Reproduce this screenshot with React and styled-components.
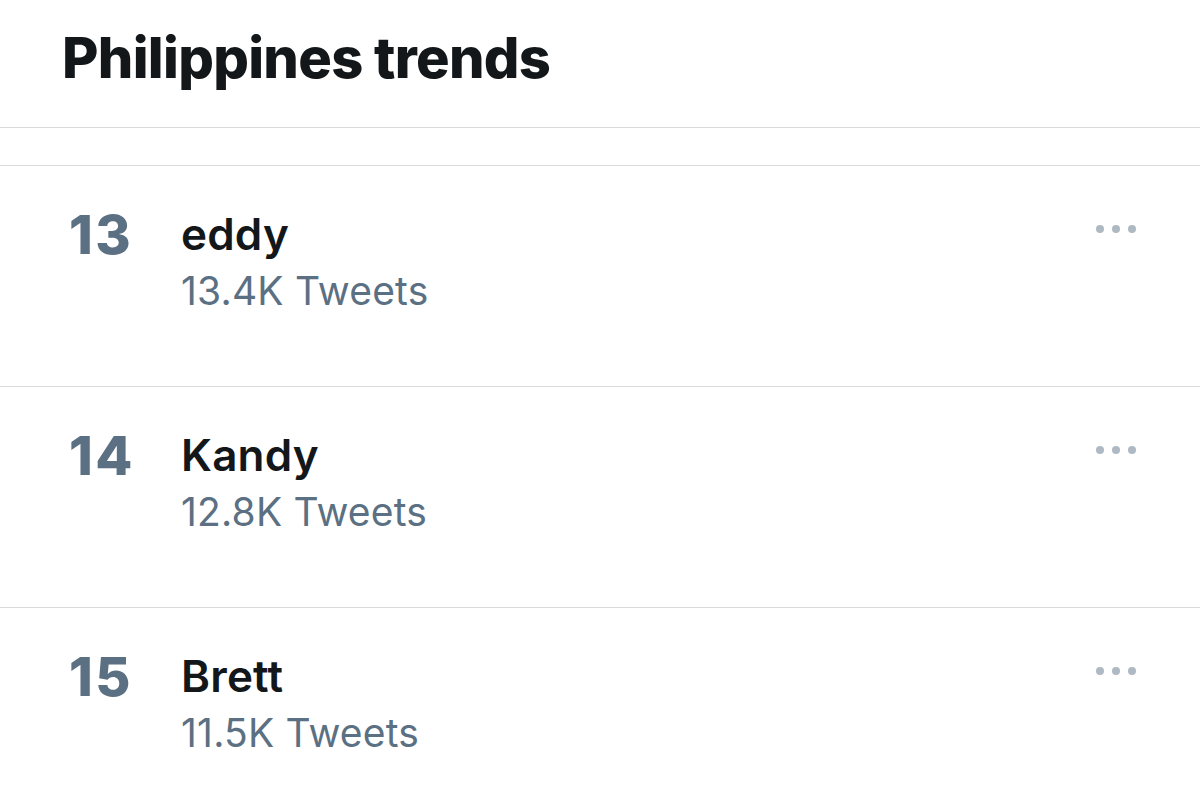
import React from "react";
import styled, { createGlobalStyle } from "styled-components";

const GlobalStyle = createGlobalStyle`
  html, body {
    margin: 0;
    padding: 0;
    background: #ffffff;
  }
  body {
    font-family: Inter, "Noto Sans", "Liberation Sans", sans-serif;
    -webkit-font-smoothing: antialiased;
  }
`;

const trends = [
  { rank: 13, name: "eddy", count: "13.4K Tweets" },
  { rank: 14, name: "Kandy", count: "12.8K Tweets" },
  { rank: 15, name: "Brett", count: "11.5K Tweets" },
];

const App = () => {
  return (
    <>
      <GlobalStyle />
      <Page>
        <Header>
          <Title>Philippines trends</Title>
        </Header>
        <Spacer />
        <List>
          {trends.map((t) => (
            <Row key={t.rank}>
              <Rank>{t.rank}</Rank>
              <Body>
                <Name>{t.name}</Name>
                <Count>{t.count}</Count>
              </Body>
              <More aria-label="More">
                <Dot />
                <Dot />
                <Dot />
              </More>
            </Row>
          ))}
        </List>
      </Page>
    </>
  );
};

const Page = styled.div`
  width: 1200px;
  height: 794px;
  overflow: hidden;
  background: #fff;
`;

const Header = styled.header`
  height: 127px;
  display: flex;
  align-items: flex-start;
  padding: 0 62px;
  border-bottom: 1px solid #d9d9d9;
`;

const Title = styled.h1`
  margin: 26px 0 0;
  font-size: 56px;
  line-height: 64px;
  font-weight: 800;
  letter-spacing: -0.7px;
  color: #14171a;
`;

const Spacer = styled.div`
  height: 37px;
  border-bottom: 1px solid #d9d9d9;
`;

const List = styled.ul`
  list-style: none;
  margin: 0;
  padding: 0;
`;

const Row = styled.li`
  height: 220px;
  display: flex;
  align-items: flex-start;
  padding: 0 64px 0 69px;
  border-bottom: 1px solid #d9d9d9;
`;

const Rank = styled.div`
  width: 112px;
  margin-top: 39px;
  font-size: 54px;
  line-height: 60px;
  font-weight: 800;
  color: #5b7083;
  letter-spacing: 2.5px;
`;

const Body = styled.div`
  flex: 1;
  display: flex;
  flex-direction: column;
  margin-top: 40px;
`;

const Name = styled.div`
  font-size: 44px;
  line-height: 56px;
  font-weight: 600;
  color: #14171a;
  letter-spacing: 0.2px;
`;

const Count = styled.div`
  margin-top: 4px;
  font-size: 39px;
  line-height: 50px;
  font-weight: 400;
  color: #5b7083;
  letter-spacing: 0.2px;
`;

const More = styled.div`
  display: flex;
  gap: 8px;
  margin-top: 59px;
`;

const Dot = styled.span`
  width: 8px;
  height: 8px;
  border-radius: 50%;
  background: #aeb9c3;
`;

export default App;
